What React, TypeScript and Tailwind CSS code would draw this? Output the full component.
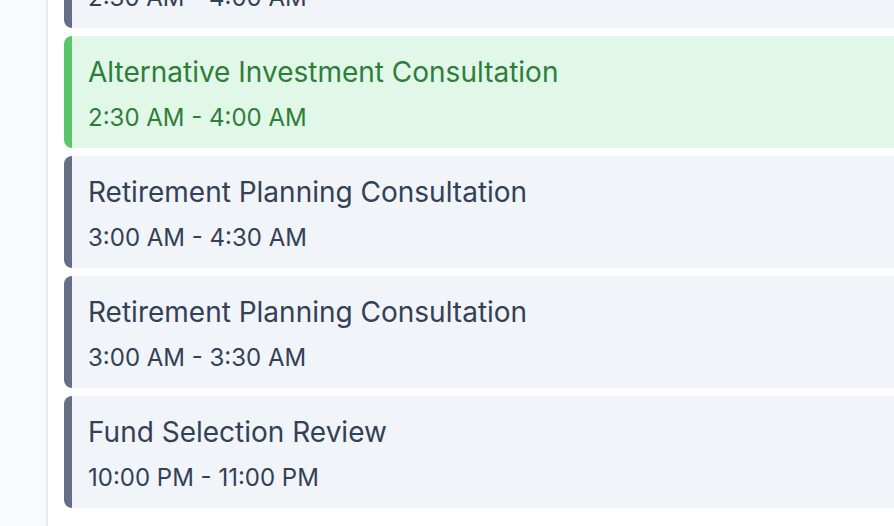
import React from "react";

type Booking = {
  title: string;
  time: string;
  active?: boolean;
};

const BOOKINGS: Booking[] = [
  { title: "Retirement Planning Consultation", time: "2:30 AM - 4:00 AM" },
  { title: "Alternative Investment Consultation", time: "2:30 AM - 4:00 AM", active: true },
  { title: "Retirement Planning Consultation", time: "3:00 AM - 4:30 AM" },
  { title: "Retirement Planning Consultation", time: "3:00 AM - 3:30 AM" },
  { title: "Fund Selection Review", time: "10:00 PM - 11:00 PM" },
];

function BookingCard({ booking }: { booking: Booking }) {
  return (
    <div
      className={
        booking.active
          ? "h-[112px] w-[900px] shrink-0 rounded-l-lg border-l-8 border-[#5cc46a] bg-[#e1f8e8] pl-4 pt-[19px] flex flex-col text-[#2f7d3a]"
          : "h-[112px] w-[900px] shrink-0 rounded-l-lg border-l-8 border-[#667085] bg-[#f1f4f9] pl-4 pt-[19px] flex flex-col text-[#334155]"
      }
    >
      <p className="text-[28px] leading-[34px]">{booking.title}</p>
      <p className="mt-[15px] text-[24px] leading-[28px]">{booking.time}</p>
    </div>
  );
}

export default function App() {
  return (
    <div
      className="flex h-[526px] w-[894px] overflow-hidden bg-white"
      style={{ fontFamily: "Inter, 'Noto Sans', sans-serif" }}
    >
      {/* Barra lateral */}
      <div className="h-full w-[48px] shrink-0 border-r-2 border-[#e6ebf1] bg-[#f8fafc]" />

      {/* Lista de citas */}
      <div className="flex-1 pl-4">
        <div className="mt-[-84px] flex flex-col gap-2">
          {BOOKINGS.map((b, i) => (
            <BookingCard key={i} booking={b} />
          ))}
        </div>
      </div>
    </div>
  );
}
